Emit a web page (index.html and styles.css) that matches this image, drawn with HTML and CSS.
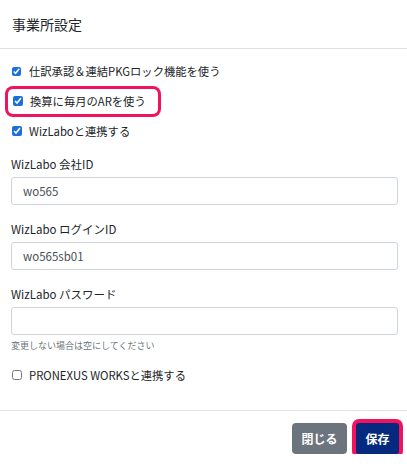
FILE: index.html
```html
<!DOCTYPE html>
<html lang="ja">
<head>
    <meta charset="UTF-8">
    <title>事業所設定</title>
    <link rel="stylesheet" href="styles.css">
</head>
<body>
    <div class="modal">
        <div class="modal-header">
            <h3>事業所設定</h3>
        </div>

        <div class="modal-body">
            <label class="check-row small">
                <input type="checkbox" checked> 仕訳承認＆連結PKGロック機能を使う
            </label>
            <div class="check-row">
                <label class="marked">
                    <input type="checkbox" checked> 換算に毎月のARを使う
                </label>
            </div>
            <label class="check-row">
                <input type="checkbox" checked> WizLaboと連携する
            </label>

            <div class="form-group first">
                <label for="companyId">WizLabo 会社ID</label>
                <input type="text" id="companyId" value="wo565">
            </div>
            <div class="form-group">
                <label for="loginId">WizLabo ログインID</label>
                <input type="text" id="loginId" value="wo565sb01">
            </div>
            <div class="form-group">
                <label for="password">WizLabo パスワード</label>
                <input type="password" id="password">
                <div class="help">変更しない場合は空にしてください</div>
            </div>

            <label class="check-row plain">
                <input type="checkbox"> PRONEXUS WORKSと連携する
            </label>
        </div>

        <div class="modal-footer">
            <button class="btn btn-secondary">閉じる</button>
            <button class="btn btn-primary marked-btn">保存</button>
        </div>
    </div>
</body>
</html>
```

FILE: styles.css
```css
body {
    margin: 0;
    background: #fff;
    font-family: "Noto Sans CJK JP", "Noto Sans", sans-serif;
    color: #212529;
}
.modal {
    width: 407px;
}
.modal-header {
    height: 48px;
    display: flex;
    align-items: center;
    padding: 0 12px;
    border-bottom: 1px solid #dee2e6;
}
h3 {
    margin: 0;
    font-size: 14px;
    font-weight: 400;
}
.modal-body {
    padding: 7px 9px 20px 11px;
}
.check-row {
    height: 30px;
    display: flex;
    align-items: center;
    font-size: 11.3px;
    padding-left: 1px;
}
.check-row input {
    width: 10px;
    height: 10px;
    margin: 0 7px 0 0;
    accent-color: #1a6fd8;
}
.check-row.small input {
    width: 9px;
    height: 9px;
    margin-right: 8px;
}
.marked {
    display: inline-flex;
    align-items: center;
    height: 25px;
    padding: 0 12px 0 5px;
    margin-left: -4px;
    border-radius: 5px;
    box-shadow: 0 0 0 3px #f2135f;
}
.form-group {
    margin-top: 15px;
}
.form-group.first {
    margin-top: 9px;
}
.form-group label {
    display: block;
    height: 18px;
    line-height: 18px;
    font-size: 11.5px;
    margin-bottom: 4px;
}
.form-group input {
    box-sizing: border-box;
    width: 387px;
    height: 28px;
    padding: 0 11px;
    border: 1px solid #ced4da;
    border-radius: 3px;
    font-family: inherit;
    font-size: 11.5px;
    color: #495057;
}
.help {
    margin-top: 5px;
    font-size: 9px;
    line-height: 12px;
    color: #6c757d;
}
.check-row.plain {
    margin-top: 8px;
}
.modal-footer {
    border-top: 1px solid #dee2e6;
    display: flex;
    justify-content: flex-end;
    gap: 9px;
    padding: 12px 8px 0 0;
}
.btn {
    height: 31px;
    padding: 0;
    border: none;
    border-radius: 4px;
    color: #fff;
    font-family: inherit;
    font-size: 12px;
    font-weight: 700;
    white-space: nowrap;
}
.btn-secondary {
    width: 55px;
    background: #6c757d;
}
.btn-primary {
    width: 43px;
    background: #04297f;
}
.marked-btn {
    box-shadow: 0 0 0 4px #f2135f;
    border-radius: 3px;
}
```
